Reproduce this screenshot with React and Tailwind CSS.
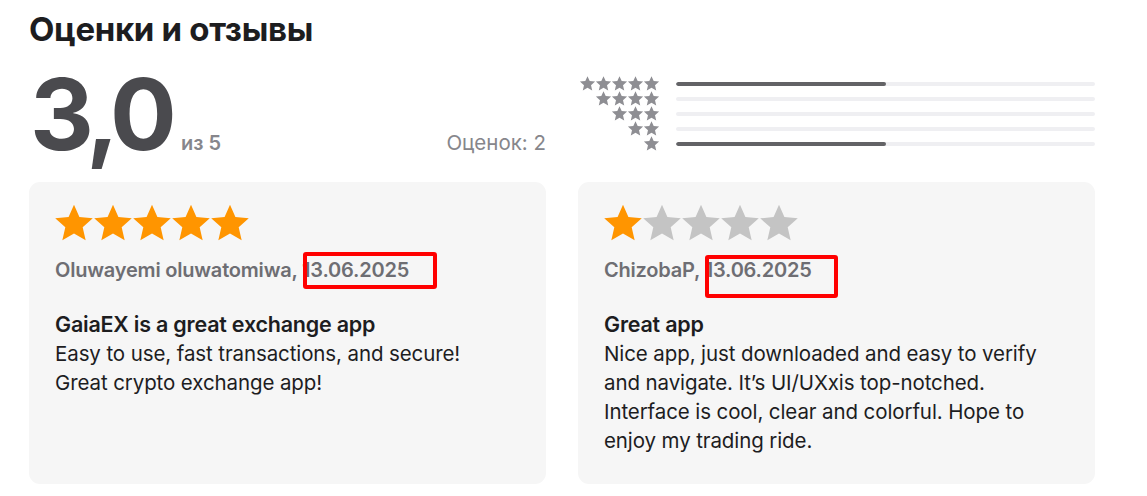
import React from 'react';

const STAR = 'M12 1.6l3.09 7.02 7.64.72-5.77 5.07 1.7 7.49L12 17.98 5.34 21.9l1.7-7.49L1.27 9.34l7.64-.72z';

const Star = ({ className }) => (
  <svg viewBox="0 0 24 24" className={className} fill="currentColor">
    <path d={STAR} />
  </svg>
);

const reviews = [
  {
    rating: 5,
    author: 'Oluwayemi oluwatomiwa',
    date: '13.06.2025',
    title: 'GaiaEX is a great exchange app',
    body: ['Easy to use, fast transactions, and secure!', 'Great crypto exchange app!'],
    box: 'w-[134px] h-[37px] left-[1px] -top-[6px]',
  },
  {
    rating: 1,
    author: 'ChizobaP',
    date: '13.06.2025',
    title: 'Great app',
    body: [
      'Nice app, just downloaded and easy to verify',
      'and navigate. It’s UI/UXxis top-notched.',
      'Interface is cool, clear and colorful. Hope to',
      'enjoy my trading ride.',
    ],
    box: 'w-[133px] h-[43px] left-0 -top-[3px]',
  },
];

const histogram = [
  { stars: 5, pct: 50 },
  { stars: 4, pct: 0 },
  { stars: 3, pct: 0 },
  { stars: 2, pct: 0 },
  { stars: 1, pct: 50 },
];

const ReviewCard = ({ review }) => (
  <div className="bg-[#f6f6f6] rounded-[11px] pl-[26px] pr-4 pt-[20px] pb-7">
    <div className="flex -ml-[2px]">
      {[1, 2, 3, 4, 5].map((i) => (
        <Star
          key={i}
          className={`w-[42px] h-[42px] -mr-[3px] ${i <= review.rating ? 'text-[#ff9500]' : 'text-[#c4c4c4]'}`}
        />
      ))}
    </div>
    <p className="mt-[13px] text-[20px] leading-[26px] font-semibold text-[#6e6e73] tracking-[-0.01em]">
      {review.author},{' '}
      <span className="relative">
        {review.date}
        <span className={`absolute border-[4px] border-[#ff0000] rounded-[3px] ${review.box}`} />
      </span>
    </p>
    <h3 className="mt-[27px] text-[21.5px] leading-[28px] font-semibold text-[#1d1d1f] tracking-[-0.01em]">{review.title}</h3>
    <div className="mt-[1px] text-[20.5px] leading-[29px] text-[#1d1d1f] tracking-[-0.005em]">
      {review.body.map((line, i) => (
        <p key={i}>{line}</p>
      ))}
    </div>
  </div>
);

const App = () => {
  return (
    <div
      className="w-[1147px] h-[496px] bg-white pl-[29px] pr-[52px] pt-[8px] overflow-hidden"
      style={{ fontFamily: 'Inter, "Noto Sans", sans-serif' }}
    >
      <h2 className="text-[33px] leading-[42px] font-bold text-[#1d1d1f] tracking-[-0.01em]">Оценки и отзывы</h2>

      <div className="grid grid-cols-2 gap-8 mt-[18px] h-[114px]">
        {/* Summary */}
        <div className="flex items-end justify-between pb-[28px]">
          <div className="flex items-end">
            <span className="text-[99px] leading-[80px] font-bold text-[#4a4a4e] tracking-[-0.06em] ml-[1px]">3,0</span>
            <span className="ml-[10px] text-[20px] leading-[22px] font-semibold text-[#86868b]">из 5</span>
          </div>
          <span className="text-[20.5px] leading-[22px] text-[#86868b]">Оценок: 2</span>
        </div>

        {/* Histogram */}
        <div className="flex flex-col pt-[8px]">
          {histogram.map((row) => (
            <div key={row.stars} className="flex items-center h-[15px]">
              <div className="w-[81px] flex justify-end">
                {Array.from({ length: row.stars }).map((_, i) => (
                  <Star key={i} className="w-[17px] h-[17px] -mx-[0.5px] text-[#8e8e93]" />
                ))}
              </div>
              <div className="ml-[17px] flex-1 h-[4px] rounded-full bg-[#efeff2] overflow-hidden">
                <div className="h-full bg-[#636366] rounded-full" style={{ width: `${row.pct}%` }} />
              </div>
            </div>
          ))}
        </div>
      </div>

      <div className="grid grid-cols-2 gap-8 h-[302px]">
        {reviews.map((r, i) => (
          <ReviewCard key={i} review={r} />
        ))}
      </div>
    </div>
  );
};

export default App;
